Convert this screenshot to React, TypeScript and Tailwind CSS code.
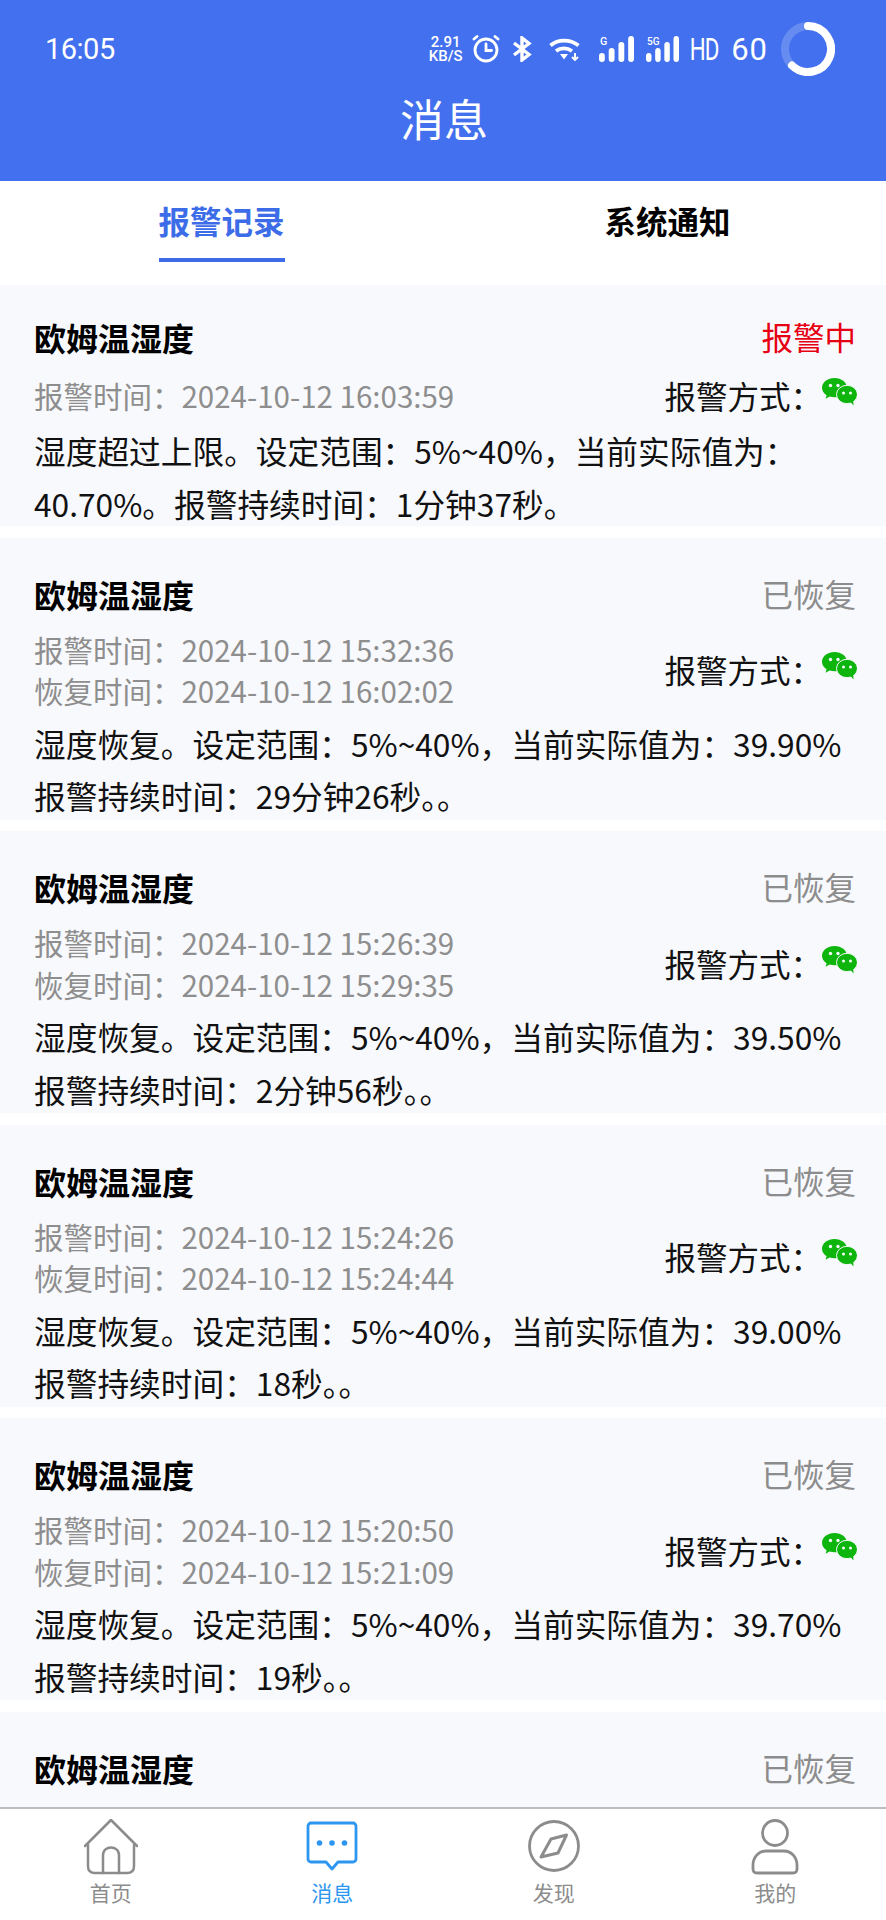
import React from 'react';

const alarms = [
  { status: '报警中', active: true, times: ['报警时间\uFF1A2024-10-12 16:03:59'], lines: ['湿度超过上限。设定范围\uFF1A5%~40%\uFF0C当前实际值为\uFF1A', '40.70%。报警持续时间\uFF1A1分钟37秒。'] },
  { status: '已恢复', times: ['报警时间\uFF1A2024-10-12 15:32:36', '恢复时间\uFF1A2024-10-12 16:02:02'], lines: ['湿度恢复。设定范围\uFF1A5%~40%\uFF0C当前实际值为\uFF1A39.90%', '报警持续时间\uFF1A29分钟26秒。。'] },
  { status: '已恢复', times: ['报警时间\uFF1A2024-10-12 15:26:39', '恢复时间\uFF1A2024-10-12 15:29:35'], lines: ['湿度恢复。设定范围\uFF1A5%~40%\uFF0C当前实际值为\uFF1A39.50%', '报警持续时间\uFF1A2分钟56秒。。'] },
  { status: '已恢复', times: ['报警时间\uFF1A2024-10-12 15:24:26', '恢复时间\uFF1A2024-10-12 15:24:44'], lines: ['湿度恢复。设定范围\uFF1A5%~40%\uFF0C当前实际值为\uFF1A39.00%', '报警持续时间\uFF1A18秒。。'] },
  { status: '已恢复', times: ['报警时间\uFF1A2024-10-12 15:20:50', '恢复时间\uFF1A2024-10-12 15:21:09'], lines: ['湿度恢复。设定范围\uFF1A5%~40%\uFF0C当前实际值为\uFF1A39.70%', '报警持续时间\uFF1A19秒。。'] },
];

const WeChat = () => (
  <svg width="35" height="28" viewBox="0 0 35 28" className="mb-[8px] -mr-[1px] shrink-0">
    <path d="M12.500 0C5.600 0 0 4.300 0 9.700c0 3.100 1.800 5.700 4.600 7.500l-1 3.600 4-2.200c1.600.5 3.200.7 4.900.7 6.900 0 12.500-4.300 12.500-9.600S19.400 0 12.500 0z" fill="#0db50d" />
    <circle cx="8.500" cy="7.500" r="1.700" fill="#f8f9fd" />
    <circle cx="16" cy="7.500" r="1.700" fill="#f8f9fd" />
    <ellipse cx="25" cy="16.500" rx="10.500" ry="9.200" fill="#0db50d" stroke="#f8f9fd" strokeWidth="1" />
    <path d="M28.500 24l3 3.500-.3-5z" fill="#0db50d" />
    <circle cx="21.500" cy="15" r="1.500" fill="#f8f9fd" />
    <circle cx="28.500" cy="15" r="1.500" fill="#f8f9fd" />
  </svg>
);

const Signal = ({ label, width }: { label: string; width: number }) => (
  <svg width={width} height="26" viewBox="0 0 36 26" preserveAspectRatio="none" fill="#fff">
    <text x="1" y="9" fontSize="11" fontFamily="Roboto, sans-serif" fontWeight="500">{label}</text>
    <rect x="0" y="17" width="6" height="9" rx="3" />
    <rect x="10" y="12" width="6" height="14" rx="3" />
    <rect x="20" y="6" width="6" height="20" rx="3" />
    <rect x="30" y="0" width="6" height="26" rx="3" />
  </svg>
);

const StatusBar = () => (
  <div className="flex h-[88px] items-center pl-[45px] pr-[51px] pt-[10px] text-white font-['Roboto',sans-serif]">
    <span className="text-[29px] leading-none tracking-[-0.5px]">16:05</span>
    <div className="ml-auto flex items-center">
      <div className="flex w-[36px] flex-col items-center text-[15px] font-medium leading-[14px]">
        <span>2.91</span>
        <span className="whitespace-nowrap">KB/S</span>
      </div>
      <svg width="28" height="28" viewBox="0 0 28 28" fill="none" stroke="#fff" strokeWidth="2.800" strokeLinecap="round" className="ml-[8px]">
        <circle cx="14" cy="15" r="11" />
        <path d="M14 9v6.500h5.500M2 4l3-2.500M26 4l-3-2.500" />
      </svg>
      <svg width="20" height="26" viewBox="0 0 20 26" fill="none" stroke="#fff" strokeWidth="3.400" className="ml-[12px]">
        <path d="M2 7l15 11.500L10 24V2l7 5.500L2 19" />
      </svg>
      <svg width="32" height="24" viewBox="0 0 32 24" fill="none" stroke="#fff" strokeWidth="3.800" className="ml-[17px]">
        <path d="M1.500 8.500C9 2 21 2 29.500 8.500M7 14c4.500-3.500 11-3.500 16 0" />
        <path d="M11 17h8L15 22.500z" fill="#fff" stroke="none" />
        <path d="M26 16v7M23 20l3 3 3-3" strokeWidth="2" />
      </svg>
      <div className="ml-[18px]"><Signal label="G" width={35} /></div>
      <div className="ml-[12px]"><Signal label="5G" width={33} /></div>
      <span className="ml-[5px] origin-center scale-x-[0.72] text-[31px] leading-none tracking-[-1px]">HD</span>
      <span className="ml-[7px] text-[31px] leading-none tracking-[1px]">60</span>
      <svg width="54" height="54" viewBox="0 0 54 54" fill="none" strokeWidth="8" className="ml-[13px]">
        <circle cx="27" cy="27" r="23" stroke="#fff" strokeOpacity="0.2" />
        <path d="M27 4a23 23 0 1 1-16 39.500" stroke="#fff" strokeLinecap="round" />
      </svg>
    </div>
  </div>
);

const AlarmCard = ({ item, index }: { item: (typeof alarms)[number]; index: number }) => (
  <div className={`shrink-0 bg-[#f8f9fd] pl-[34px] pr-[30px] ${index === 0 ? 'h-[241px] pt-[30px]' : 'h-[282px] pt-[34px]'}`}>
    <div className="flex h-[44px] items-center justify-between">
      <span className="text-[32px] font-bold text-black">欧姆温湿度</span>
      <span className={`text-[31.500px] ${item.active ? 'text-[#e60012]' : 'text-[#8c8c8c]'}`}>{item.status}</span>
    </div>
    <div className="mt-[13px] flex items-center justify-between">
      <div className="text-[29.500px] leading-[41.500px] whitespace-nowrap text-[#8e8e8e]">
        {item.times.map((t) => (
          <div key={t}>{t}</div>
        ))}
      </div>
      <div className="flex items-center text-[31.500px] whitespace-nowrap text-[#111111]">
        报警方式{'\uFF1A'}
        <WeChat />
      </div>
    </div>
    <div className="mt-[5px] text-[31.700px] leading-[52.500px] whitespace-nowrap text-[#111111]">
      {item.lines.map((l) => (
        <div key={l}>{l}</div>
      ))}
    </div>
  </div>
);

const navGray = '#8c8c8c';

const BottomNav = () => (
  <div className="flex h-[113px] shrink-0 border-t-2 border-[#bdbdbd] bg-white pt-[10px]">
    <div className="flex flex-1 flex-col items-center">
      <svg width="54" height="56" viewBox="0 0 54 56" fill="none" stroke={navGray} strokeWidth="2.500" strokeLinejoin="round" strokeLinecap="round">
        <path d="M1 27L27 1l26 26" />
        <path d="M4 26v21c0 5 3 7 7 7h32c4 0 7-2 7-7V26" />
        <path d="M19 54V36c0-10 16-10 16 0v18" />
      </svg>
      <span className="mt-[2px] text-[21px] leading-[30px] text-[#8c8c8c]">首页</span>
    </div>
    <div className="flex flex-1 flex-col items-center">
      <svg width="54" height="56" viewBox="0 0 54 56" fill="none">
        <path d="M6 4h42a3 3 0 0 1 3 3v33a3 3 0 0 1-3 3H33l-6 7-6-7H6a3 3 0 0 1-3-3V7a3 3 0 0 1 3-3z" stroke="#2d96f0" strokeWidth="2.800" strokeLinejoin="round" />
        <circle cx="14.500" cy="24" r="2.800" fill="#2d96f0" />
        <circle cx="27" cy="24" r="2.800" fill="#2d96f0" />
        <circle cx="39.500" cy="24" r="2.800" fill="#2d96f0" />
      </svg>
      <span className="mt-[2px] text-[21px] leading-[30px] text-[#2d96f0]">消息</span>
    </div>
    <div className="flex flex-1 flex-col items-center">
      <svg width="54" height="56" viewBox="0 0 54 56" fill="none" stroke={navGray} strokeWidth="2.800" strokeLinejoin="round">
        <circle cx="27" cy="27" r="24.500" />
        <path d="M39.500 16L31 34l-17 4 10-18z" strokeWidth="3" />
      </svg>
      <span className="mt-[2px] text-[21px] leading-[30px] text-[#8c8c8c]">发现</span>
    </div>
    <div className="flex flex-1 flex-col items-center">
      <svg width="54" height="56" viewBox="0 0 54 56" fill="none" stroke={navGray} strokeWidth="2.800">
        <circle cx="27" cy="14" r="12.500" />
        <path d="M18 32h18c8 0 13 7 13 14v4c0 3-2 4-4 4H9c-2 0-4-1-4-4v-4c0-7 5-14 13-14z" />
      </svg>
      <span className="mt-[2px] text-[21px] leading-[30px] text-[#8c8c8c]">我的</span>
    </div>
  </div>
);

export default function App() {
  return (
    <div className="flex h-[1920px] w-[886px] flex-col overflow-hidden bg-white font-['Noto_Sans_CJK_SC','Noto_Sans',sans-serif]">
      <div className="h-[181px] shrink-0 bg-[#4270ee]">
        <StatusBar />
        <div className="pl-[2px] text-center text-[44px] leading-[60px] text-white">消息</div>
      </div>

      <div className="flex h-[104px] shrink-0 bg-white">
        <div className="flex flex-1 justify-center pl-[3px]">
          <div className="h-[81px] w-[126px] border-b-4 border-[#3d6ce8] pt-[17px] text-[31.500px] font-bold leading-[44px] whitespace-nowrap text-[#3d6ce8]">报警记录</div>
        </div>
        <div className="flex flex-1 justify-center pl-[9px]">
          <div className="pt-[17px] text-[31.500px] font-bold leading-[44px] text-black">系统通知</div>
        </div>
      </div>

      <div className="flex min-h-0 flex-1 flex-col gap-[11.500px] overflow-hidden">
        {alarms.map((item, i) => (
          <AlarmCard key={i} item={item} index={i} />
        ))}
        <div className="h-[110px] shrink-0 bg-[#f8f9fd] pl-[34px] pr-[30px] pt-[34px]">
          <div className="flex h-[44px] items-center justify-between">
            <span className="text-[32px] font-bold text-black">欧姆温湿度</span>
            <span className="text-[31.500px] text-[#8c8c8c]">已恢复</span>
          </div>
        </div>
      </div>

      <BottomNav />
    </div>
  );
}
